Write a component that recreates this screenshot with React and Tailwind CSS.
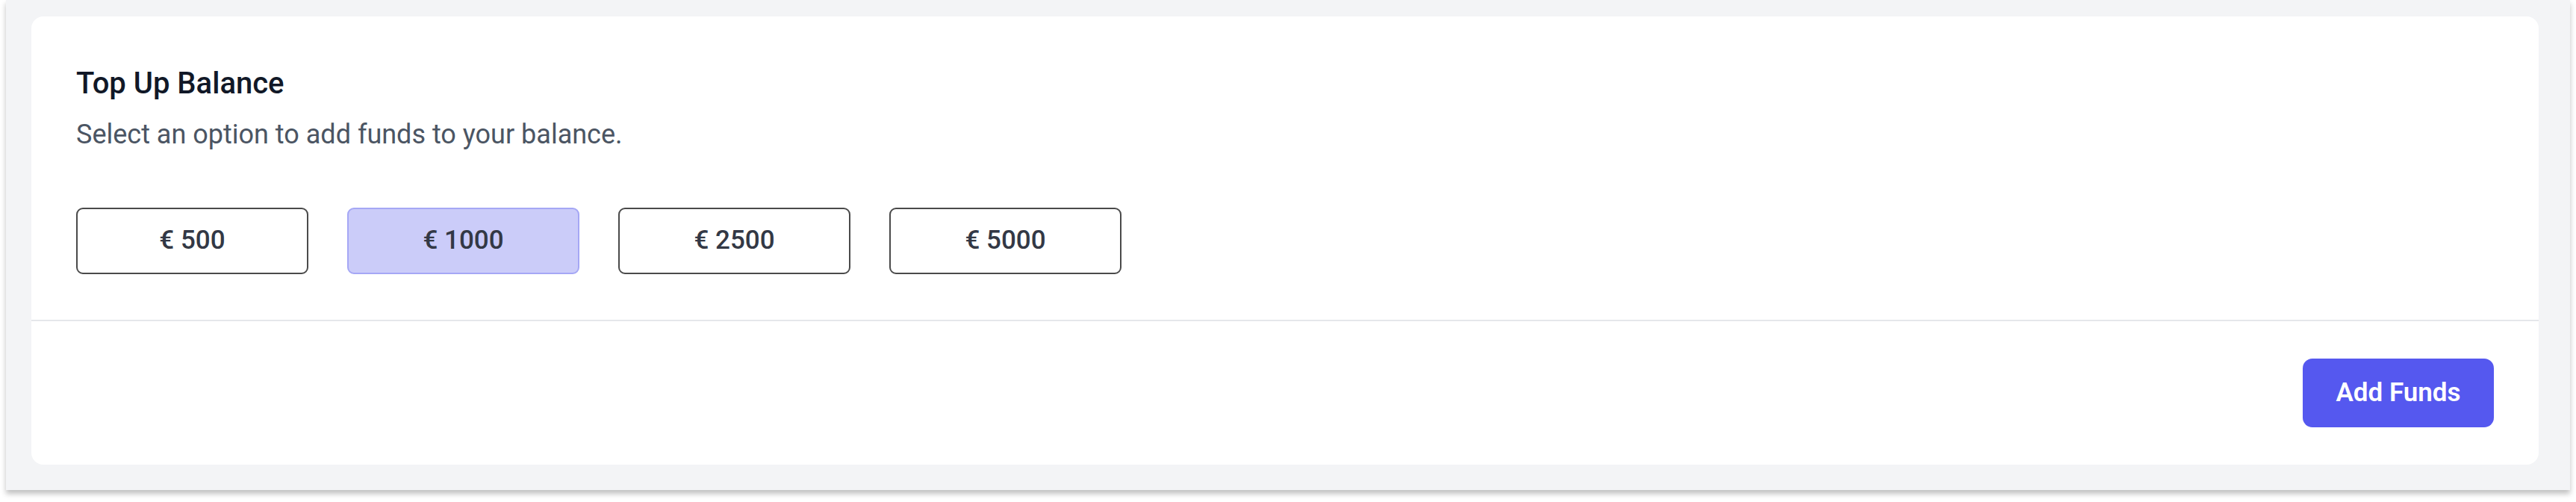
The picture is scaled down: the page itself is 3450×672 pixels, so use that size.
import React, { useState } from 'react';

const amounts = [500, 1000, 2500, 5000];

export default function App() {
  const [selected, setSelected] = useState(1000);

  return (
    <div className="bg-white min-h-[672px] font-['Roboto','Liberation_Sans',sans-serif]">
      <div className="ml-[8px] w-[3434px] h-[656px] bg-[#f3f4f6] pt-[22px] pl-[34px] pr-[42px] pb-[34px] shadow-[0_5px_7px_rgba(0,0,0,0.25)]">
        <div className="bg-white rounded-[16px] h-full flex flex-col">
          {/* Options */}
          <div className="pt-[66px] pl-[60px] pr-[60px] pb-[61px] border-b-2 border-[#e5e7eb]">
            <h2 className="text-[40px] leading-[48px] font-medium text-[#111827]">Top Up Balance</h2>
            <p className="mt-[20px] text-[36px] leading-[48px] text-[#4b5563]">
              Select an option to add funds to your balance.
            </p>
            <div className="mt-[74px] flex gap-[52px]">
              {amounts.map(a => (
                <button
                  key={a}
                  onClick={() => setSelected(a)}
                  className={
                    a === selected
                      ? 'w-[311px] h-[89px] rounded-[9px] border-2 border-[#a5a7f5] bg-[#cbccf9] text-[35px] font-medium text-[#333845]'
                      : 'w-[311px] h-[89px] rounded-[9px] border-2 border-[#4a4a4a] bg-white text-[35px] font-medium text-[#333845]'
                  }
                >
                  € {a}
                </button>
              ))}
            </div>
          </div>

          {/* Footer */}
          <div className="flex-1 flex justify-end items-center pr-[60px]">
            <button className="w-[256px] h-[92px] rounded-[13px] bg-[#5558ef] text-white text-[35px] font-semibold">
              Add Funds
            </button>
          </div>
        </div>
      </div>
    </div>
  );
}
